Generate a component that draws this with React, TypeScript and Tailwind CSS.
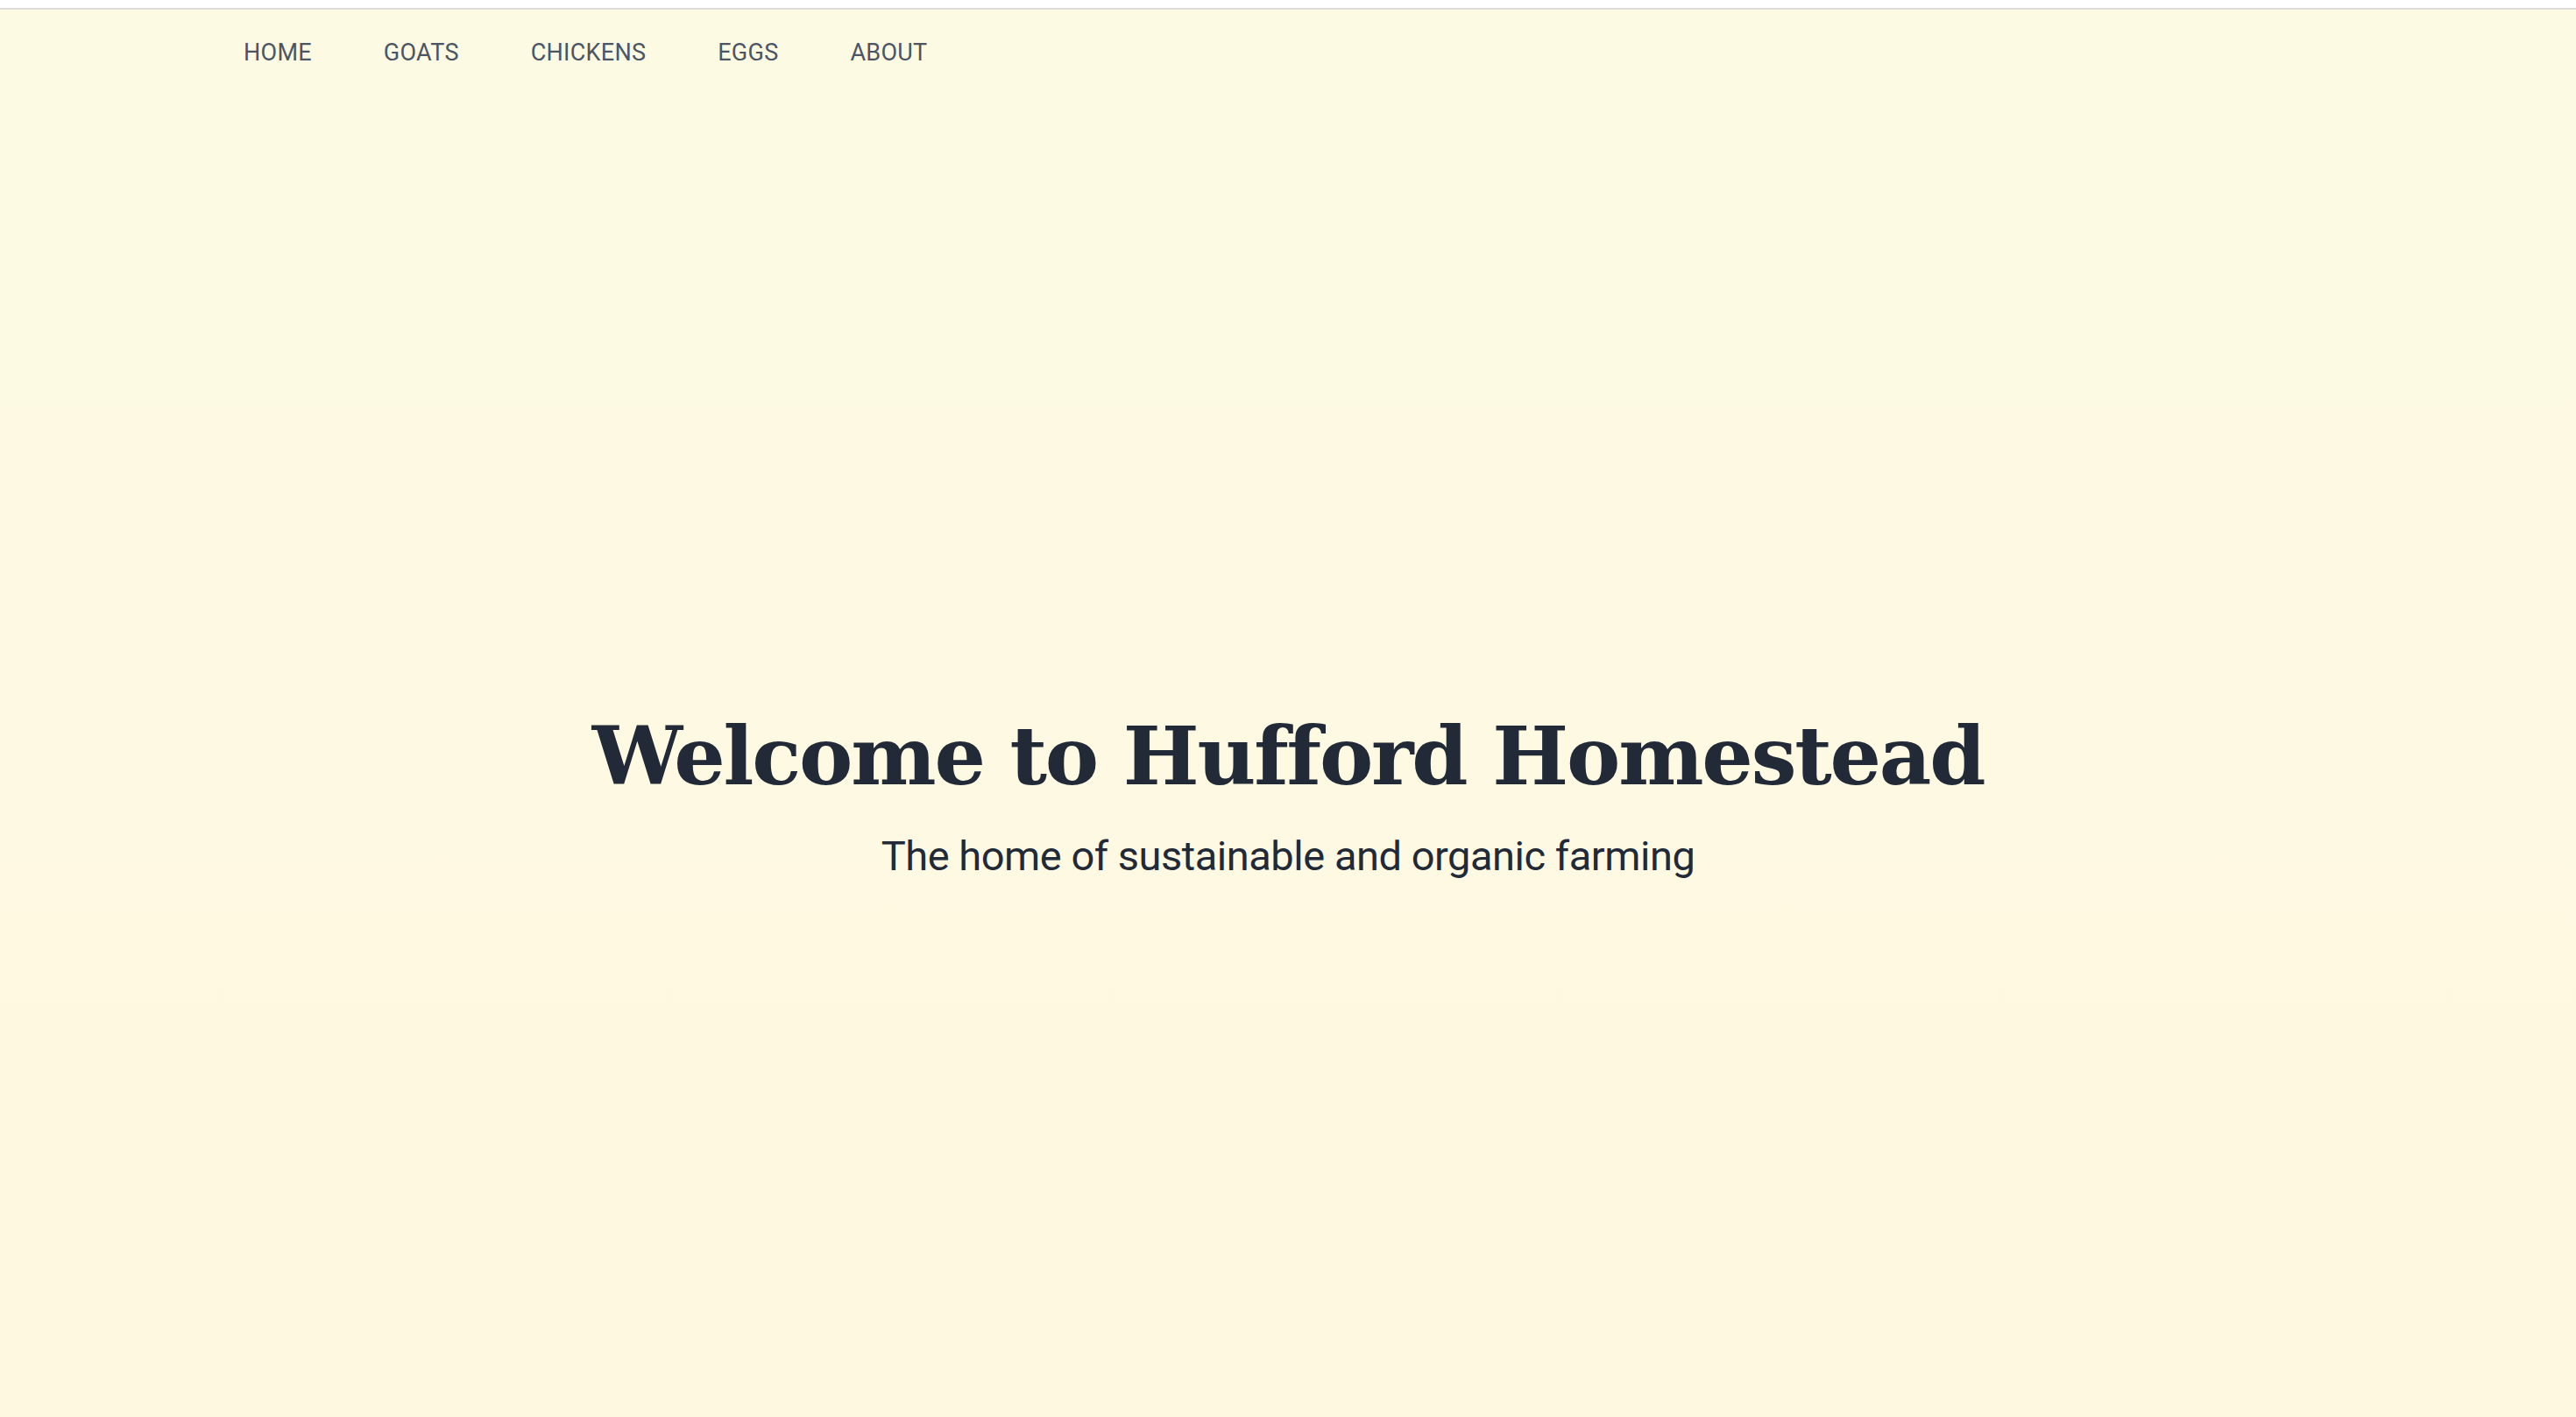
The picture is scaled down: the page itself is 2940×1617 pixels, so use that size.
export default function App() {
  const links = ["HOME", "GOATS", "CHICKENS", "EGGS", "ABOUT"];
  return (
    <div className="min-h-screen bg-white pt-[9px]">
      <div className="min-h-[1608px] border-t-2 border-[#dcdcdc] bg-linear-to-b from-[#fcfae3] to-[#fff8e1]">
        <nav className="flex gap-[82px] pl-[278px] pt-[29px] font-['Roboto',sans-serif] text-[27px] leading-[40px] tracking-[0.01em] text-[#4b5563]">
          {links.map((l) => (
            <a key={l} href="#" className="block">
              {l}
            </a>
          ))}
        </nav>
        <main className="flex flex-col items-center pt-[737px]">
          <h1 className="font-['DejaVu_Serif',serif] text-[92px] font-bold leading-none tracking-[-0.024em] text-[#222a38]">
            Welcome to Hufford Homestead
          </h1>
          <p className="mt-[44px] font-['Roboto',sans-serif] text-[47px] leading-none tracking-[-0.01em] text-[#222a38]">
            The home of sustainable and organic farming
          </p>
        </main>
      </div>
    </div>
  );
}
